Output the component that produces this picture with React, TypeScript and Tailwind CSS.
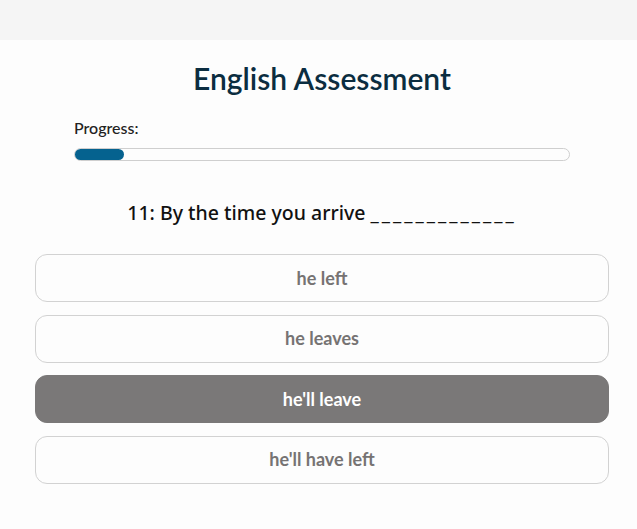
import React, { useState } from "react";

const options = ["he left", "he leaves", "he'll leave", "he'll have left"];

export default function App() {
  const [selected, setSelected] = useState<number>(2);
  const progress = 10;

  return (
    <div className="min-h-[529px] bg-[#fdfdfd] font-['Lato',sans-serif]">
      {/* top bar */}
      <div className="h-[40px] bg-[#f5f5f5]"></div>

      <div className="pl-[35px] pr-[28px]">
        <h1 className="mt-[18px] text-center text-[30px] font-semibold leading-[40px] text-[#0b2d40]">
          English Assessment
        </h1>

        {/* progress */}
        <div className="mx-[39px] mt-[20px]">
          <p className="text-[16px] font-medium leading-[20px] text-[#222]">Progress:</p>
          <div className="mt-[10px] h-[13px] w-full rounded-full border border-[#cfcfcf] bg-[#fdfdfd]">
            <div
              className="h-full rounded-full bg-[#05628f]"
              style={{ width: `${progress}%` }}
            ></div>
          </div>
        </div>

        <p className="mt-[37px] text-center text-[19.5px] font-medium leading-[30px] text-[#111] font-['Noto_Sans',sans-serif]">
          11: By the time you arrive{" "}
          <span className="font-semibold tracking-[3px]">_____________</span>
        </p>

        {/* options */}
        <div className="mt-[26px] flex flex-col gap-[12.5px]">
          {options.map((opt, i) => (
            <button
              key={opt}
              type="button"
              onClick={() => setSelected(i)}
              className={
                i === selected
                  ? "h-[48px] w-full rounded-[12px] border border-[#7a7878] bg-[#7a7878] text-[18px] font-bold text-white"
                  : "h-[48px] w-full rounded-[12px] border border-[#d2d2d2] bg-[#fdfdfd] text-[18px] font-bold text-[#767373]"
              }
            >
              {opt}
            </button>
          ))}
        </div>
      </div>
    </div>
  );
}
